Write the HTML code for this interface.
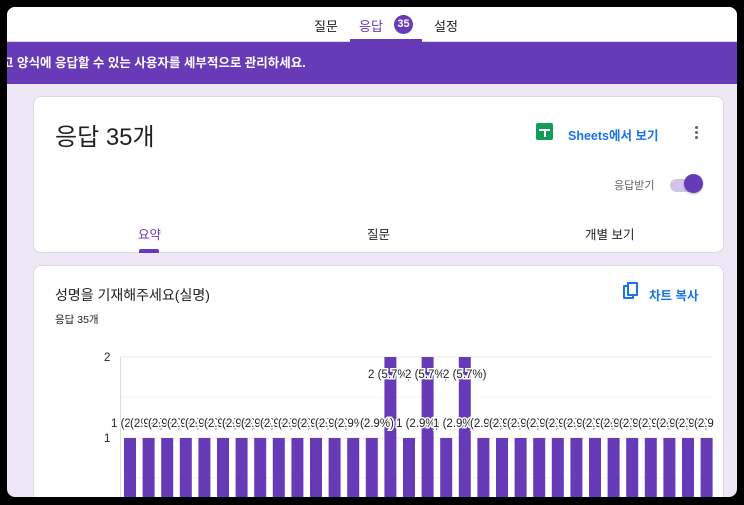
<!DOCTYPE html>
<html><head><meta charset="utf-8"><style>
*{margin:0;padding:0;box-sizing:border-box}
body{width:744px;height:505px;background:#000;position:relative;overflow:hidden;font-family:"Liberation Sans","Noto Sans CJK KR",sans-serif}
#pg{position:absolute;left:7px;top:7px;width:730px;height:490px;background:#ede7f6;border-radius:8px;overflow:hidden}
#top{position:absolute;left:0;top:0;width:730px;height:35px;background:#fff;border-bottom:1px solid #ddd}
.t{position:absolute;top:9px;font-size:13px;color:#202124}
#ban{position:absolute;left:0;top:35px;width:730px;height:42px;background:#673ab7;color:#fff;font-size:12.5px;font-weight:bold;line-height:42px;white-space:nowrap}
.card{position:absolute;left:26px;width:691px;background:#fff;border-radius:8px;border:1px solid #dadce0}
</style></head><body>
<div id="pg">
<div id="top">
<span class="t" style="left:307px">질문</span>
<span class="t" style="left:352px;color:#673ab7">응답</span>
<span style="position:absolute;left:387px;top:8px;width:19px;height:19px;border-radius:50%;background:#673ab7;color:#fff;font-size:11px;font-weight:bold;text-align:center;line-height:19px">35</span>
<span class="t" style="left:427px">설정</span>
<div style="position:absolute;left:343px;top:32px;width:72px;height:3px;background:#673ab7"></div>
</div>
<div id="ban"><span style="position:absolute;left:-5px">고 양식에 응답할 수 있는 사용자를 세부적으로 관리하세요.</span></div>
<div class="card" style="top:89px;height:157px">
<div style="position:absolute;left:21px;top:20px;font-size:24px;color:#202124">응답 35개</div>
<div style="position:absolute;left:502px;top:26px;width:17px;height:17px;background:#0f9d58;border-radius:2px"><div style="position:absolute;left:3px;top:6px;width:11px;height:2px;background:#fff"></div><div style="position:absolute;left:7.5px;top:6px;width:2px;height:8px;background:#fff"></div></div>
<div style="position:absolute;left:534px;top:28px;font-size:12.5px;color:#1a73e8;font-weight:bold">Sheets에서 보기</div>
<div style="position:absolute;left:661px;top:29px;width:3px;height:3px;background:#5f6368;border-radius:50%;box-shadow:0 5px 0 #5f6368,0 10px 0 #5f6368"></div>
<div style="position:absolute;left:580px;top:80px;font-size:11px;color:#5f6368">응답받기</div>
<div style="position:absolute;left:636px;top:82px;width:30px;height:13px;background:#d1c4e9;border-radius:7px"></div>
<div style="position:absolute;left:650px;top:77px;width:19px;height:19px;background:#673ab7;border-radius:50%;box-shadow:0 1px 2px rgba(0,0,0,.3)"></div>
<div style="position:absolute;left:104px;top:127px;font-size:12.5px;color:#673ab7">요약</div>
<div style="position:absolute;left:105px;top:152px;width:20px;height:4px;background:#673ab7;border-radius:2px 2px 0 0"></div>
<div style="position:absolute;left:333px;top:127px;font-size:12.5px;color:#202124">질문</div>
<div style="position:absolute;left:551px;top:127px;font-size:12.5px;color:#202124">개별 보기</div>
</div>
<div class="card" style="top:258px;height:260px">
<div style="position:absolute;left:21px;top:19px;font-size:14px;color:#202124">성명을 기재해주세요(실명)</div>
<div style="position:absolute;left:21px;top:46px;font-size:10.5px;color:#202124">응답 35개</div>
<div style="position:absolute;left:589px;top:19px;width:11px;height:14px;border:2px solid #1a73e8;border-radius:1px"></div>
<div style="position:absolute;left:593px;top:16px;width:11px;height:14px;border:2px solid #1a73e8;border-radius:1px;background:#fff"></div>
<div style="position:absolute;left:615px;top:19px;font-size:12.5px;color:#1a73e8;font-weight:bold">차트 복사</div>
</div>
</div>
<svg style="position:absolute;left:0;top:0" width="744" height="497" font-family="Liberation Sans, sans-serif" font-size="11.5">
<line x1="120" y1="357" x2="713" y2="357" stroke="#eee"/>
<line x1="120" y1="397" x2="713" y2="397" stroke="#f4f4f4"/>
<line x1="120" y1="438" x2="713" y2="438" stroke="#eee"/>
<line x1="120" y1="478" x2="713" y2="478" stroke="#f4f4f4"/>
<line x1="120.5" y1="357" x2="120.5" y2="497" stroke="#ddd"/>
<text x="104" y="361" fill="#202124">2</text>
<text x="104" y="442" fill="#202124">1</text>
<g fill="#673ab7">
<rect x="124" y="438" width="12" height="60"/><rect x="142.6" y="438" width="12" height="60"/><rect x="161.2" y="438" width="12" height="60"/><rect x="179.8" y="438" width="12" height="60"/><rect x="198.4" y="438" width="12" height="60"/><rect x="217" y="438" width="12" height="60"/><rect x="235.6" y="438" width="12" height="60"/><rect x="254.2" y="438" width="12" height="60"/><rect x="272.8" y="438" width="12" height="60"/><rect x="291.4" y="438" width="12" height="60"/><rect x="310" y="438" width="12" height="60"/><rect x="328.6" y="438" width="12" height="60"/><rect x="347.2" y="438" width="12" height="60"/><rect x="365.8" y="438" width="12" height="60"/><rect x="384.4" y="357" width="12" height="141"/><rect x="403" y="438" width="12" height="60"/><rect x="421.6" y="357" width="12" height="141"/><rect x="440.2" y="438" width="12" height="60"/><rect x="458.8" y="357" width="12" height="141"/><rect x="477.4" y="438" width="12" height="60"/><rect x="496" y="438" width="12" height="60"/><rect x="514.6" y="438" width="12" height="60"/><rect x="533.2" y="438" width="12" height="60"/><rect x="551.8" y="438" width="12" height="60"/><rect x="570.4" y="438" width="12" height="60"/><rect x="589" y="438" width="12" height="60"/><rect x="607.6" y="438" width="12" height="60"/><rect x="626.2" y="438" width="12" height="60"/><rect x="644.8" y="438" width="12" height="60"/><rect x="663.4" y="438" width="12" height="60"/><rect x="682" y="438" width="12" height="60"/><rect x="700.6" y="438" width="12" height="60"/>
</g>
<g fill="#202124" stroke="#fff" stroke-width="3" paint-order="stroke">
<text x="111" y="427">1 (2.9%)</text><text x="130" y="427">(2.9%)</text><text x="148" y="427">(2.9%)</text><text x="167" y="427">(2.9%)</text><text x="185" y="427">(2.9%)</text><text x="204" y="427">(2.9%)</text><text x="222" y="427">(2.9%)</text><text x="241" y="427">(2.9%)</text><text x="260" y="427">(2.9%)</text><text x="278" y="427">(2.9%)</text><text x="297" y="427">(2.9%)</text><text x="315" y="427">(2.9%)</text><text x="334" y="427">(2.9%)</text><text x="360" y="427">(2.9%)</text>
<text x="396" y="427">1 (2.9%)</text><text x="433" y="427">1 (2.9%)</text>
<text x="470" y="427">(2.9%)</text><text x="489" y="427">(2.9%)</text><text x="507" y="427">(2.9%)</text><text x="526" y="427">(2.9%)</text><text x="545" y="427">(2.9%)</text><text x="563" y="427">(2.9%)</text><text x="582" y="427">(2.9%)</text><text x="600" y="427">(2.9%)</text><text x="619" y="427">(2.9%)</text><text x="638" y="427">(2.9%)</text><text x="656" y="427">(2.9%)</text><text x="675" y="427">(2.9%)</text><text x="694" y="427">(2.9</text>
<text x="368" y="378">2 (5.7%)</text><text x="405" y="378">2 (5.7%)</text><text x="443" y="378">2 (5.7%)</text>
</g>
<rect x="0" y="0" width="7" height="505" fill="#000"/><rect x="737" y="0" width="7" height="505" fill="#000"/><rect x="0" y="497" width="744" height="8" fill="#000"/>
</svg>
</body></html>
